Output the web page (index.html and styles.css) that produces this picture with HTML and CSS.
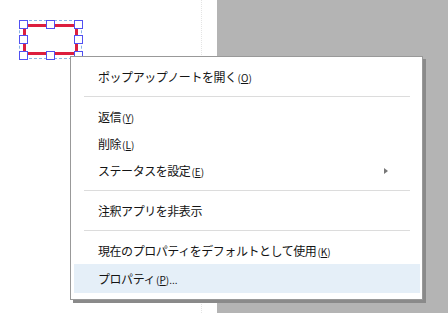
FILE: index.html
```html
<!DOCTYPE html>
<html lang="ja">
<head>
    <meta charset="UTF-8">
    <title>注釈メニュー</title>
    <link rel="stylesheet" href="styles.css">
</head>
<body>
    <div class="viewer">
        <div class="page">
            <div class="page-body"></div>
            <div class="page-gap"></div>
        </div>
        <div class="backdrop"></div>

        <!-- selected annotation with its handles -->
        <div class="annot">
            <div class="annot-frame"></div>
            <div class="annot-rect"></div>
            <span class="handle h-tl"></span>
            <span class="handle h-tc"></span>
            <span class="handle h-tr"></span>
            <span class="handle h-ml"></span>
            <span class="handle h-mr"></span>
            <span class="handle h-bl"></span>
            <span class="handle h-bc"></span>
            <span class="handle h-br"></span>
        </div>

        <ul class="menu">
            <li class="item">ポップアップノートを開く<span class="key">(<u>O</u>)</span></li>
            <li class="sep"></li>
            <li class="item">返信<span class="key">(<u>Y</u>)</span></li>
            <li class="item">削除<span class="key">(<u>L</u>)</span></li>
            <li class="item has-sub">ステータスを設定<span class="key">(<u>E</u>)</span><span class="arrow"></span></li>
            <li class="sep"></li>
            <li class="item">注釈アプリを非表示</li>
            <li class="sep"></li>
            <li class="item">現在のプロパティをデフォルトとして使用<span class="key">(<u>K</u>)</span></li>
            <li class="item hover">プロパティ<span class="key">(<u>P</u>)...</span></li>
        </ul>
    </div>
</body>
</html>
```

FILE: styles.css
```css
* {
    box-sizing: border-box;
}

body {
    margin: 0;
    font-family: "Noto Sans CJK JP", "Noto Sans", sans-serif;
    color: #141414;
    background-color: #b4b4b4;
}

.viewer {
    position: relative;
    display: flex;
    width: 448px;
    height: 313px;
    overflow: hidden;
}

.page {
    display: flex;
    width: 217px;
    background-color: #fff;
}

.page-body {
    width: 202px;
    border-right: 1px dotted #e4e4e4;
}

.page-gap {
    flex: 1;
}

.backdrop {
    flex: 1;
    background-color: #b4b4b4;
}

/* annotation */
.annot {
    position: absolute;
    left: 19px;
    top: 20px;
    width: 63px;
    height: 39px;
}

.annot-frame {
    position: absolute;
    inset: 0;
    border: 1px dashed #8ab4e8;
}

.annot-rect {
    position: absolute;
    left: 4px;
    top: 4px;
    width: 55px;
    height: 31px;
    border: 3px solid #dc1f3f;
}

.handle {
    position: absolute;
    width: 9px;
    height: 9px;
    background-color: #fff;
    border: 1px solid #5151f2;
}

.h-tl { left: 0; top: 0; }
.h-tc { left: 27px; top: 0; }
.h-tr { left: 55px; top: 0; }
.h-ml { left: 0; top: 15px; }
.h-mr { left: 55px; top: 15px; }
.h-bl { left: 0; top: 31px; }
.h-bc { left: 27px; top: 31px; }
.h-br { left: 55px; top: 31px; }

/* context menu */
.menu {
    position: absolute;
    left: 70px;
    top: 56px;
    width: 353px;
    margin: 0;
    padding: 6px 2px 6px 3px;
    list-style: none;
    background-color: #fff;
    border: 1px solid #999;
    box-shadow: 3px 3px 0 #8a8a8a;
}

.item {
    position: relative;
    display: flex;
    align-items: baseline;
    height: 27px;
    line-height: 27px;
    padding-left: 24px;
    font-size: 12px;
    letter-spacing: -0.45px;
    white-space: nowrap;
}

.item.hover {
    height: 29px;
    line-height: 29px;
    background-color: #e5eff8;
}

.key {
    font-size: 10px;
    letter-spacing: 0;
    margin-left: 1px;
}

.key u {
    text-decoration-thickness: 1px;
    text-underline-offset: 1px;
}

.arrow {
    position: absolute;
    right: 32px;
    top: 11px;
    width: 0;
    height: 0;
    border-top: 3.5px solid transparent;
    border-bottom: 3.5px solid transparent;
    border-left: 4px solid #777;
}

.sep {
    height: 1px;
    margin: 6px 10px 6px 10px;
    background-color: #dcdcdc;
}
```
